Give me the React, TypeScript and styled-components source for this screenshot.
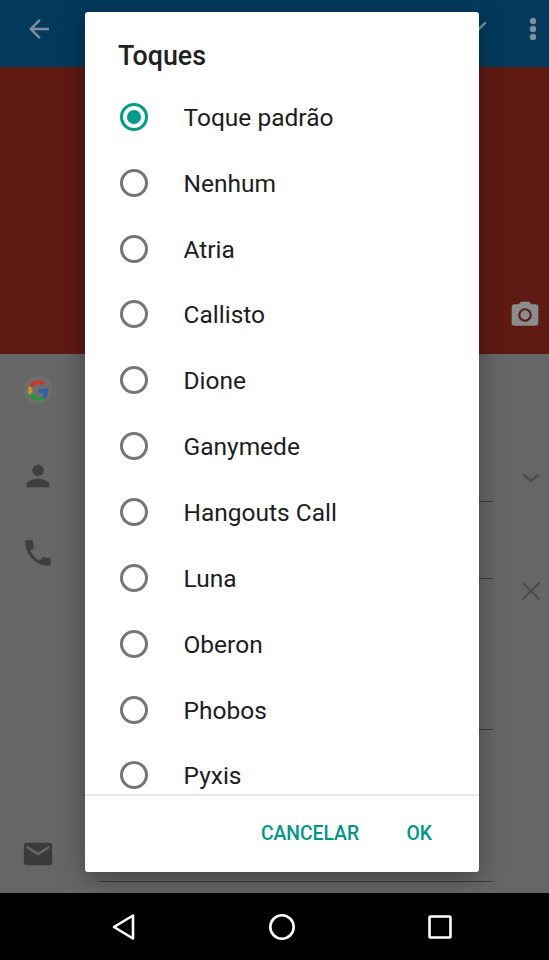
import React from "react";
import styled, { createGlobalStyle } from "styled-components";

const Global = createGlobalStyle`
  html, body { margin: 0; padding: 0; background: #000; }
  * { box-sizing: border-box; }
`;

const Screen = styled.div`
  position: relative;
  width: 549px;
  height: 960px;
  overflow: hidden;
  display: flex;
  flex-direction: column;
  font-family: Roboto, "Liberation Sans", sans-serif;
`;

const AppBar = styled.header`
  height: 67px;
  flex: none;
  background: #033a5c;
  display: flex;
  align-items: center;
  padding: 0 4px 10px 24px;
  color: #7d8f9a;
`;

const AppBarActions = styled.div`
  margin-left: auto;
  display: flex;
  align-items: center;
  gap: 31px;
`;

const Hero = styled.div`
  height: 287px;
  flex: none;
  background: #5e1a13;
  display: flex;
  align-items: flex-end;
  justify-content: flex-end;
  padding: 0 8px 23px 0;
`;

const Form = styled.main`
  flex: 1;
  background: #666666;
  display: flex;
  flex-direction: column;
`;

const FormRow = styled.div<{ $h: number }>`
  height: ${(p) => p.$h}px;
  flex: none;
  display: flex;
  align-items: flex-end;
`;

const IconCell = styled.div<{ $pb: number }>`
  width: 99px;
  flex: none;
  padding: 0 0 ${(p) => p.$pb}px 21px;
  display: flex;
`;

const FieldLine = styled.div<{ $line: boolean }>`
  width: 394px;
  height: 1px;
  background: ${(p) => (p.$line ? "#3a3a3a" : "transparent")};
`;

const EndIcon = styled.div<{ $pb: number }>`
  margin-left: 26px;
  width: 24px;
  height: 24px;
  flex: none;
  align-self: flex-end;
  margin-bottom: ${(p) => p.$pb}px;
  color: #4b4b4b;
`;

const GoogleBadge = styled.div`
  width: 28px;
  height: 28px;
  margin-left: 3px;
  border-radius: 50%;
  background: #6e6e6e;
  display: flex;
  align-items: center;
  justify-content: center;
`;

const NavBar = styled.nav`
  height: 67px;
  flex: none;
  background: #000;
  display: flex;
  align-items: center;
  justify-content: space-between;
  padding: 0 97px 0 112px;
`;

const Dialog = styled.section`
  position: absolute;
  left: 85px;
  top: 12px;
  width: 394px;
  height: 860px;
  background: #fff;
  border-radius: 3px;
  box-shadow: 0 6px 24px rgba(0, 0, 0, 0.35);
  display: flex;
  flex-direction: column;
`;

const Title = styled.h2`
  margin: 0;
  height: 72px;
  flex: none;
  padding: 28px 33px 0;
  font-size: 26.8px;
  line-height: 32px;
  font-weight: 500;
  color: #212121;
`;

const List = styled.ul`
  list-style: none;
  margin: 0;
  padding: 0;
  flex: 1;
  min-height: 0;
  overflow: hidden;
`;

const Item = styled.li`
  height: 65.85px;
  display: flex;
  align-items: center;
  padding-left: 35px;
  font-size: 24.5px;
  line-height: 30px;
  color: #1d1d1d;
`;

const ItemLabel = styled.span`
  padding-top: 2px;
`;

const Radio = styled.span<{ $on: boolean }>`
  width: 28px;
  height: 28px;
  flex: none;
  border-radius: 50%;
  border: 3px solid ${(p) => (p.$on ? "#009c87" : "#757575")};
  display: flex;
  align-items: center;
  justify-content: center;
  margin-right: 35.5px;
  &::after {
    content: "";
    width: 14px;
    height: 14px;
    border-radius: 50%;
    background: ${(p) => (p.$on ? "#009c87" : "transparent")};
  }
`;

const Actions = styled.footer`
  height: 78px;
  flex: none;
  border-top: 2px solid #e8e8e8;
  display: flex;
  align-items: center;
  justify-content: flex-end;
  padding: 0 47px 2px 0;
  gap: 47.5px;
`;

const ActionButton = styled.button`
  border: 0;
  background: none;
  padding: 0;
  font-family: inherit;
  font-size: 19.3px;
  font-weight: 500;
  color: #009688;
`;

const Back = () => (
  <svg width="30" height="30" viewBox="0 0 24 24" fill="currentColor">
    <path d="M20 11H7.83l5.59-5.59L12 4l-8 8 8 8 1.41-1.41L7.83 13H20v-2z" />
  </svg>
);
const Check = () => (
  <svg width="28" height="28" viewBox="0 0 24 24" fill="currentColor">
    <path d="M9 16.17 4.83 12l-1.42 1.41L9 19 21 7l-1.41-1.41z" />
  </svg>
);
const Dots = () => (
  <svg width="24" height="32" viewBox="0 0 24 32" fill="currentColor">
    <circle cx="12" cy="8" r="3.200" />
    <circle cx="12" cy="16" r="3.200" />
    <circle cx="12" cy="24" r="3.200" />
  </svg>
);
const Camera = () => (
  <svg width="32" height="32" viewBox="0 0 24 24">
    <path
      fill="#888d8d"
      d="M9 2 7.17 4H4c-1.1 0-2 .9-2 2v12c0 1.1.9 2 2 2h16c1.1 0 2-.9 2-2V6c0-1.1-.9-2-2-2h-3.17L15 2H9z"
    />
    <circle cx="12" cy="12" r="4.300" fill="none" stroke="#5e1a13" strokeWidth="1.600" />
  </svg>
);
const GoogleG = () => (
  <svg width="21" height="21" viewBox="0 0 48 48">
    <path fill="#c23a30" d="M24 9.500c3.500 0 6.700 1.300 9.100 3.500l6.800-6.800C35.800 2.400 30.200 0 24 0 14.600 0 6.500 5.400 2.600 13.200l7.900 6.100C12.400 13.600 17.700 9.500 24 9.500z" />
    <path fill="#2f5fb0" d="M47 24.500c0-1.600-.1-3.100-.4-4.500H24v9h12.900c-.6 3-2.200 5.500-4.700 7.200l7.600 5.900C44.200 38 47 31.800 47 24.500z" />
    <path fill="#c09a20" d="M10.500 28.700C10 27.300 9.800 25.700 9.800 24s.3-3.300.7-4.700l-7.900-6.100C1 16.400 0 20.100 0 24s1 7.600 2.600 10.800l7.900-6.100z" />
    <path fill="#2f9048" d="M24 48c6.500 0 11.900-2.100 15.800-5.800l-7.600-5.900c-2.100 1.400-4.900 2.300-8.200 2.300-6.300 0-11.600-4.100-13.500-9.800l-7.900 6.100C6.500 42.600 14.600 48 24 48z" />
  </svg>
);
const Person = () => (
  <svg width="34" height="34" viewBox="0 0 24 24" fill="#3e3e3e">
    <path d="M12 12c2.210 0 4-1.790 4-4s-1.790-4-4-4-4 1.790-4 4 1.790 4 4 4zm0 2c-2.670 0-8 1.340-8 4v2h16v-2c0-2.660-5.330-4-8-4z" />
  </svg>
);
const Phone = () => (
  <svg width="34" height="34" viewBox="0 0 24 24" fill="#3e3e3e">
    <path d="M6.620 10.790c1.440 2.830 3.760 5.140 6.590 6.590l2.200-2.200c.27-.27.67-.36 1.020-.24 1.120.37 2.330.57 3.570.57.55 0 1 .45 1 1V20c0 .55-.45 1-1 1-9.390 0-17-7.610-17-17 0-.55.45-1 1-1h3.500c.55 0 1 .45 1 1 0 1.250.2 2.450.57 3.570.11.35.03.74-.25 1.020l-2.200 2.200z" />
  </svg>
);
const Mail = () => (
  <svg width="34" height="34" viewBox="0 0 24 24" fill="#3a3a3a">
    <path d="M20 4H4c-1.100 0-2 .9-2 2v12c0 1.100.9 2 2 2h16c1.100 0 2-.9 2-2V6c0-1.100-.9-2-2-2zm0 4-8 5-8-5V6l8 5 8-5v2z" />
  </svg>
);
const Chevron = () => (
  <svg width="24" height="24" viewBox="0 0 24 24" fill="none" stroke="currentColor" strokeWidth="2.400">
    <path d="M4 8.500l8 6.500 8-6.500" />
  </svg>
);
const Close = () => (
  <svg width="24" height="24" viewBox="0 0 24 24" fill="none" stroke="currentColor" strokeWidth="1.800">
    <path d="M3.500 3.500l17 17M20.500 3.500l-17 17" />
  </svg>
);
const NavBack = () => (
  <svg width="24" height="28" viewBox="0 0 24 28" fill="none" stroke="#fff" strokeWidth="2.600" strokeLinejoin="round">
    <path d="M21 2.500v23L2 14z" />
  </svg>
);
const NavHome = () => (
  <svg width="28" height="28" viewBox="0 0 28 28" fill="none" stroke="#fff" strokeWidth="2.600">
    <circle cx="14" cy="14" r="11.700" />
  </svg>
);
const NavRecent = () => (
  <svg width="24" height="24" viewBox="0 0 24 24" fill="none" stroke="#fff" strokeWidth="2.600" strokeLinejoin="round">
    <rect x="1.500" y="1.500" width="21" height="21" rx="1" />
  </svg>
);

const tones = [
  "Toque padrão",
  "Nenhum",
  "Atria",
  "Callisto",
  "Dione",
  "Ganymede",
  "Hangouts Call",
  "Luna",
  "Oberon",
  "Phobos",
  "Pyxis",
];

export default function App() {
  return (
    <Screen>
      <Global />
      <AppBar>
        <Back />
        <AppBarActions>
          <Check />
          <Dots />
        </AppBarActions>
      </AppBar>
      <Hero>
        <Camera />
      </Hero>
      <Form>
        <FormRow $h={52}>
          <IconCell $pb={2}>
            <GoogleBadge>
              <GoogleG />
            </GoogleBadge>
          </IconCell>
        </FormRow>
        <FormRow $h={96}>
          <IconCell $pb={9}>
            <Person />
          </IconCell>
          <FieldLine $line />
          <EndIcon $pb={12}>
            <Chevron />
          </EndIcon>
        </FormRow>
        <FormRow $h={77}>
          <IconCell $pb={9}>
            <Phone />
          </IconCell>
          <FieldLine $line />
          <EndIcon $pb={-24}>
            <Close />
          </EndIcon>
        </FormRow>
        <FormRow $h={151}>
          <IconCell $pb={0} />
          <FieldLine $line />
        </FormRow>
        <FormRow $h={152}>
          <IconCell $pb={11}>
            <Mail />
          </IconCell>
          <FieldLine $line />
        </FormRow>
      </Form>
      <NavBar>
        <NavBack />
        <NavHome />
        <NavRecent />
      </NavBar>
      <Dialog>
        <Title>Toques</Title>
        <List>
          {tones.map((t, i) => (
            <Item key={t}>
              <Radio $on={i === 0} />
              <ItemLabel>{t}</ItemLabel>
            </Item>
          ))}
        </List>
        <Actions>
          <ActionButton>CANCELAR</ActionButton>
          <ActionButton>OK</ActionButton>
        </Actions>
      </Dialog>
    </Screen>
  );
}
